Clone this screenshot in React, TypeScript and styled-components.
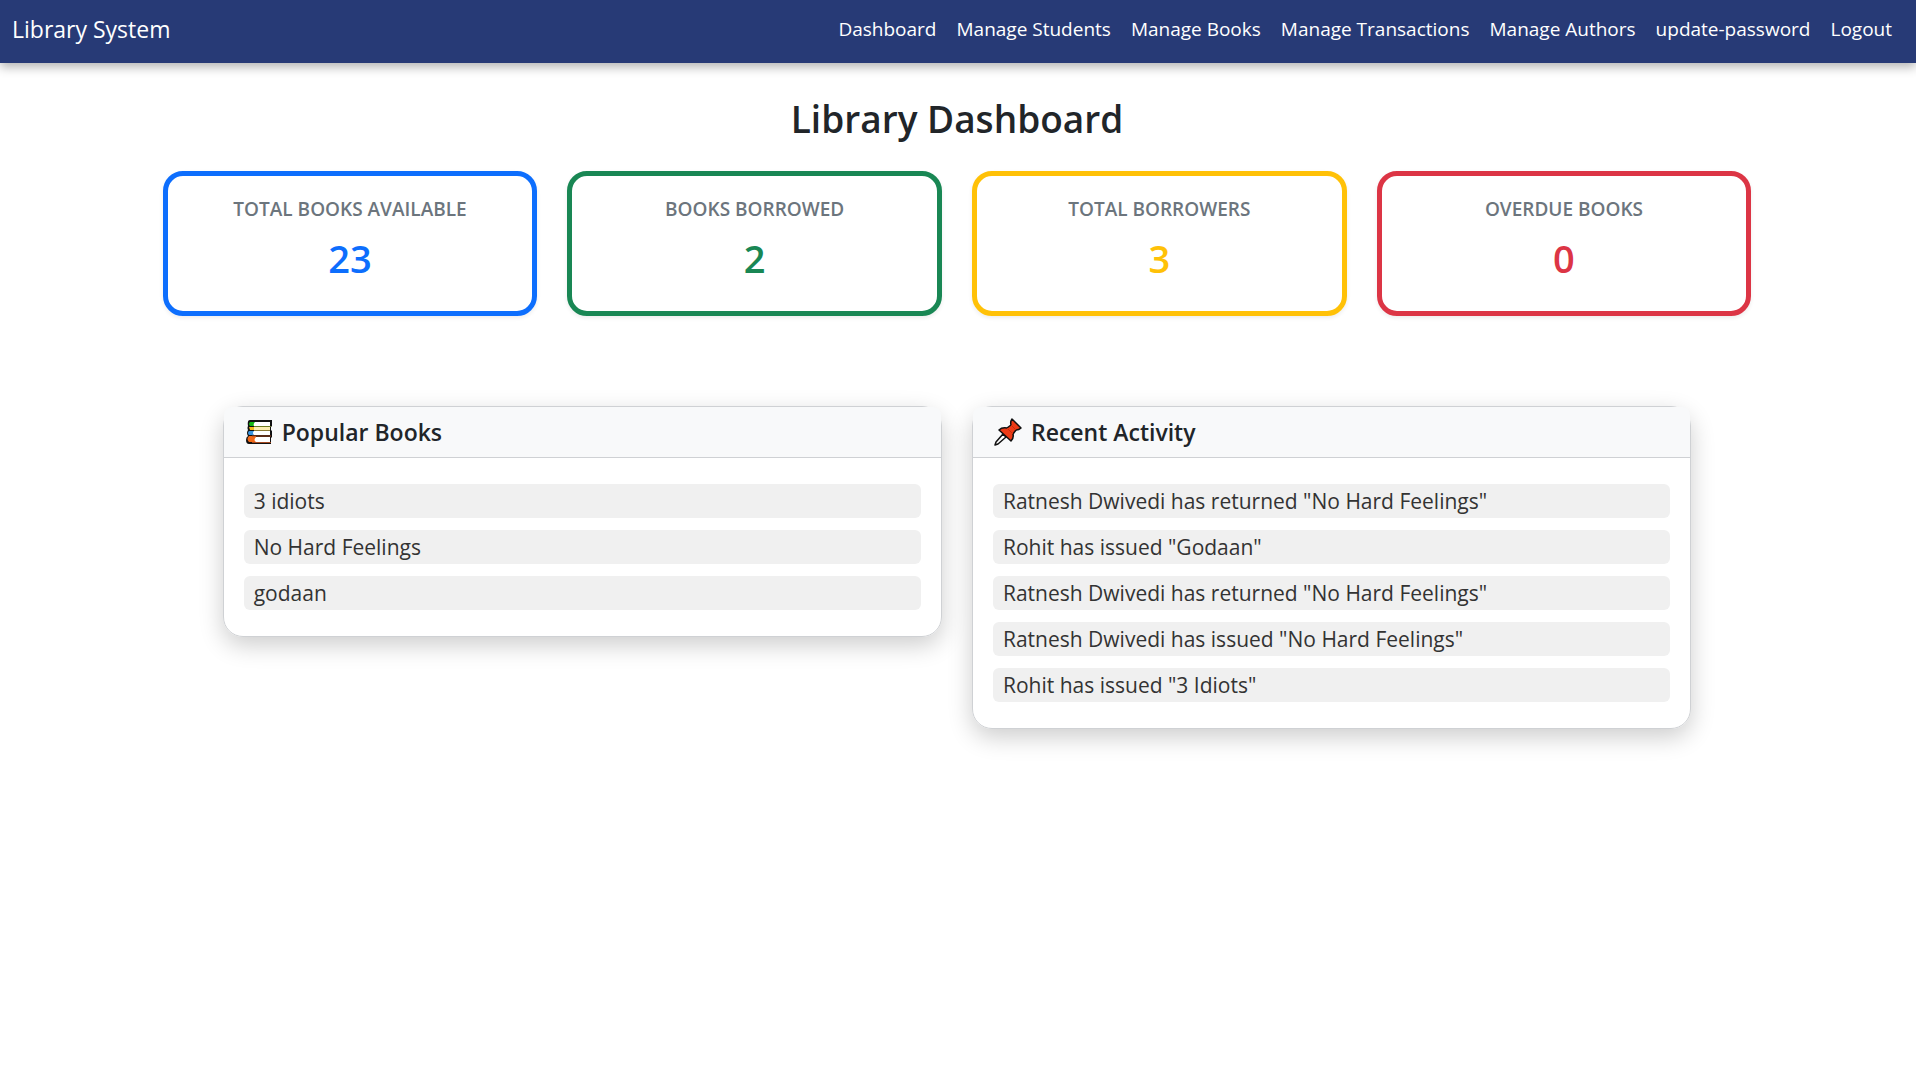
import React from "react";
import styled, { createGlobalStyle } from "styled-components";

const GlobalStyle = createGlobalStyle`
  *, *::before, *::after { box-sizing: border-box; }
  body {
    margin: 0;
    background: #fff;
    color: #212529;
    font-family: "Segoe UI", "Open Sans", "Noto Sans", sans-serif;
    font-size: 16px;
  }
`;

const Navbar = styled.header`
  display: flex;
  align-items: center;
  justify-content: space-between;
  padding: 0 24px 5px 12px;
  min-height: 63px;
  background: #273a76;
  box-shadow: 0 4px 10px rgba(0, 0, 0, 0.3);
`;

const Brand = styled.a`
  color: #fff;
  font-size: 23px;
  line-height: 36px;
  text-decoration: none;
  white-space: nowrap;
`;

const NavLinks = styled.nav`
  display: flex;
  gap: 20px;
`;

const NavLink = styled.a`
  color: #fff;
  font-size: 19px;
  line-height: 30px;
  text-decoration: none;
  white-space: nowrap;
`;

const Main = styled.main`
  padding: 32px 2px 32px 0;
`;

const Title = styled.h1`
  margin: 0 0 28px;
  font-size: 37px;
  font-weight: 600;
  line-height: 48px;
  text-align: center;
`;

const Stats = styled.section`
  display: grid;
  grid-template-columns: repeat(4, 1fr);
  gap: 30px;
  width: 83%;
  margin: 0 auto 90px;
`;

const StatCard = styled.article<{ $color: string }>`
  min-height: 145px;
  padding: 20px 16px;
  border: 5px solid ${(p) => p.$color};
  border-radius: 20px;
  box-shadow: 0 2px 4px rgba(0, 0, 0, 0.075);
  color: ${(p) => p.$color};
  text-align: center;
`;

const StatLabel = styled.h2`
  margin: 0 0 12px;
  color: #6c757d;
  font-size: 19px;
  font-weight: 600;
  line-height: 26px;
  text-transform: uppercase;
`;

const StatValue = styled.p`
  margin: 0;
  font-size: 38px;
  font-weight: 600;
  line-height: 48px;
`;

const Panels = styled.section`
  display: grid;
  grid-template-columns: 1fr 1fr;
  align-items: start;
  gap: 30px;
  width: calc(83% - 120px);
  margin: 0 auto;
`;

const Panel = styled.article`
  border: 1px solid #cfd1d4;
  border-radius: 20px;
  box-shadow: 0 8px 24px rgba(0, 0, 0, 0.2);
`;

const PanelHeader = styled.h2`
  display: flex;
  align-items: center;
  gap: 8px;
  margin: 0;
  padding: 8px 20px;
  border-bottom: 1px solid #cfd1d4;
  border-radius: 8px 8px 0 0;
  background: #f8f9fa;
  font-size: 23px;
  font-weight: 600;
  line-height: 34px;
`;

const List = styled.ul`
  display: flex;
  flex-direction: column;
  gap: 12px;
  margin: 0;
  padding: 26px 20px;
  list-style: none;
`;

const Item = styled.li`
  padding: 0 10px;
  border-radius: 6px;
  background: #f0f0f0;
  color: #333;
  font-size: 21px;
  line-height: 34px;
`;

const Icon = styled.svg`
  flex: none;
  width: 30px;
  height: 30px;
`;

function BooksIcon() {
  return (
    <Icon viewBox="0 0 30 30" aria-hidden="true">
      <path d="M6 3H28V9L27 10V13L28 14V20L27 21V27H5Q2 27 2 23Q2 20 4 19Q2 16 4 13Q3 11 4 9Q3 3 6 3Z" fill="#111" />
      <path d="M6 5H12V9H6Q4 7 6 5Z" fill="#16b516" />
      <path d="M11 5H26V9H10Q9 7 11 5Z" fill="#fff" />
      <path d="M5 10H11V13H6Z" fill="#f2b91d" />
      <path d="M10 10H26V13H10Z" fill="#fbeeb0" />
      <path d="M5 14H10V18H5Q3 16 5 14Z" fill="#3993dc" />
      <path d="M10 14H26V18H10Q8 16 10 14Z" fill="#fff" />
      <path d="M5 19H12V25H5Q2 22 5 19Z" fill="#f16918" />
      <path d="M12 20H26V25H12Q9 23 12 20Z" fill="#fff" />
      <path d="M10 9.500H27" stroke="#6c7a20" />
      <path d="M10 13.500H26" stroke="#8a7a35" />
      <path d="M8 19H27M8 25.500H27" stroke="#a44820" />
    </Icon>
  );
}

function PinIcon() {
  return (
    <Icon viewBox="0 0 30 30" aria-hidden="true">
      <path d="M10 17L13 20L5 27L2 28L3 25Z" fill="#fff" stroke="#111" strokeWidth="1.500" strokeLinejoin="round" />
      <path d="M19 2L28 11Q26 13 23 13L20 17Q21 21 18 24L6 13Q9 10 14 11L18 8Q17 5 19 2Z" fill="#ed3b16" stroke="#111" strokeWidth="1.500" strokeLinejoin="round" />
      <path d="M18 8L23 13M14 11L20 17" stroke="#c82d0c" />
    </Icon>
  );
}

const links = [
  "Dashboard",
  "Manage Students",
  "Manage Books",
  "Manage Transactions",
  "Manage Authors",
  "update-password",
  "Logout",
];

const stats = [
  { label: "Total Books Available", value: 23, color: "#0d6efd" },
  { label: "Books Borrowed", value: 2, color: "#198754" },
  { label: "Total Borrowers", value: 3, color: "#ffc107" },
  { label: "Overdue Books", value: 0, color: "#dc3545" },
];

const books = ["3 idiots", "No Hard Feelings", "godaan"];

const activity = [
  'Ratnesh Dwivedi has returned "No Hard Feelings"',
  'Rohit has issued "Godaan"',
  'Ratnesh Dwivedi has returned "No Hard Feelings"',
  'Ratnesh Dwivedi has issued "No Hard Feelings"',
  'Rohit has issued "3 Idiots"',
];

export default function App() {
  return (
    <>
      <GlobalStyle />
      <Navbar>
        <Brand href="#home">Library System</Brand>
        <NavLinks>
          {links.map((link) => (
            <NavLink key={link} href={`#${link.toLowerCase().replace(" ", "-")}`}>
              {link}
            </NavLink>
          ))}
        </NavLinks>
      </Navbar>
      <Main>
        <Title>Library Dashboard</Title>
        <Stats>
          {stats.map((s) => (
            <StatCard key={s.label} $color={s.color}>
              <StatLabel>{s.label}</StatLabel>
              <StatValue>{s.value}</StatValue>
            </StatCard>
          ))}
        </Stats>
        <Panels>
          <Panel>
            <PanelHeader>
              <BooksIcon />
              Popular Books
            </PanelHeader>
            <List>
              {books.map((b) => (
                <Item key={b}>{b}</Item>
              ))}
            </List>
          </Panel>
          <Panel>
            <PanelHeader>
              <PinIcon />
              Recent Activity
            </PanelHeader>
            <List>
              {activity.map((a, i) => (
                <Item key={i}>{a}</Item>
              ))}
            </List>
          </Panel>
        </Panels>
      </Main>
    </>
  );
}
